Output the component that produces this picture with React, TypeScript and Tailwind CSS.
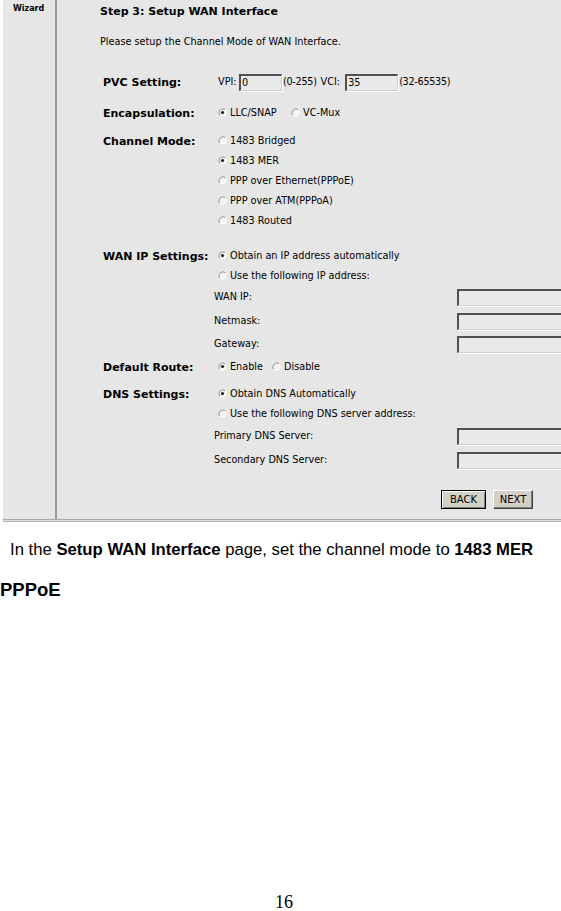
import type { ReactNode } from "react";

function Radio({ checked = false }: { checked?: boolean }) {
  return (
    <svg width="9" height="9" viewBox="0 0 9 9" className="shrink-0">
      <circle cx="4.5" cy="4.5" r="4" fill="#f3f3f3" />
      <path d="M1.7 7.3 A4 4 0 0 1 7.3 1.7" fill="none" stroke="#8c8c8c" strokeWidth="1" />
      <path d="M7.3 1.7 A4 4 0 0 1 1.7 7.3" fill="none" stroke="#ffffff" strokeWidth="1" />
      {checked && <circle cx="4.5" cy="4.5" r="1.6" fill="#1c1c1c" />}
    </svg>
  );
}

function Option({ checked, children, w }: { checked?: boolean; children: ReactNode; w?: string }) {
  return (
    <div className={`flex items-center gap-[3px] ${w ?? ""}`}>
      <Radio checked={checked} />
      <span>{children}</span>
    </div>
  );
}

function Field({ value, w }: { value?: string; w: string }) {
  return (
    <div
      className={`${w} h-[17px] shrink-0 bg-[#e9e9e9] border-t-2 border-l-2 border-t-[#505050] border-l-[#505050] border-b border-r border-b-[#d4d0c8] border-r-[#d4d0c8] shadow-[1px_1px_0_#ffffff] pl-[1px] leading-[13px] text-[9.7px]`}
    >
      {value}
    </div>
  );
}

function Row({ label, children, className = "" }: { label?: string; children?: ReactNode; className?: string }) {
  return (
    <div className={`flex h-[20px] items-center ml-[3px] ${className}`}>
      <div className="w-[115px] shrink-0 font-bold text-[11px]">{label}</div>
      <div className="flex items-center">{children}</div>
    </div>
  );
}

function FieldRow({ label, className = "" }: { label: string; className?: string }) {
  return (
    <div className={`flex h-[20px] items-center ml-[3px] ${className}`}>
      <div className="w-[111px] shrink-0" />
      <span className="w-[243px] shrink-0">{label}</span>
      <Field w="w-[110px]" />
    </div>
  );
}

export default function App() {
  return (
    <div className="w-[561px] h-[911px] bg-white overflow-hidden flex flex-col text-black">
      <div className="ml-[3px] h-[519px] shrink-0 flex bg-[#e6e6e6] overflow-hidden font-['DejaVu_Sans',sans-serif] text-[9.7px] leading-none">
        <div className="w-[52px] shrink-0 pl-[10px] pt-[5px] text-[8px] font-bold">Wizard</div>
        <div className="w-[2px] shrink-0 bg-[#9a9a9a]" />
        <div className="flex-1 flex flex-col pl-[43px]">
          <div className="mt-[1px] h-[20px] flex items-center font-bold text-[11px]">Step 3: Setup WAN Interface</div>
          <div className="mt-[11px] h-[20px] flex items-center">Please setup the Channel Mode of WAN Interface.</div>

          <Row label="PVC Setting:" className="mt-[20px]">
            <span className="w-[21px]">VPI:</span>
            <Field value="0" w="w-[43px]" />
            <span className="pl-[1px] tracking-[-0.3px]">(0-255)</span>
            <span className="ml-[4px]">VCI:</span>
            <Field value="35" w="w-[53px] ml-[5px]" />
            <span className="pl-[1px] tracking-[-0.3px]">(32-65535)</span>
          </Row>

          <Row label="Encapsulation:" className="mt-[11px]">
            <Option checked w="w-[73px]">LLC/SNAP</Option>
            <Option>VC-Mux</Option>
          </Row>

          <div className="mt-[8px] flex ml-[3px]">
            <div className="w-[115px] shrink-0 h-[20px] flex items-center font-bold text-[11px]">Channel Mode:</div>
            <div className="flex flex-col">
              <div className="h-[20px] flex items-center"><Option>1483 Bridged</Option></div>
              <div className="h-[20px] flex items-center"><Option checked>1483 MER</Option></div>
              <div className="h-[20px] flex items-center"><Option>PPP over Ethernet(PPPoE)</Option></div>
              <div className="h-[20px] flex items-center"><Option>PPP over ATM(PPPoA)</Option></div>
              <div className="h-[20px] flex items-center"><Option>1483 Routed</Option></div>
            </div>
          </div>

          <Row label="WAN IP Settings:" className="mt-[15px]">
            <Option checked>Obtain an IP address automatically</Option>
          </Row>
          <Row>
            <Option>Use the following IP address:</Option>
          </Row>
          <FieldRow label="WAN IP:" className="mt-[1px]" />
          <FieldRow label="Netmask:" className="mt-[4px]" />
          <FieldRow label="Gateway:" className="mt-[3px]" />

          <Row label="Default Route:" className="mt-[3px]">
            <Option checked w="w-[54px]">Enable</Option>
            <Option>Disable</Option>
          </Row>

          <Row label="DNS Settings:" className="mt-[7px]">
            <Option checked>Obtain DNS Automatically</Option>
          </Row>
          <Row>
            <Option>Use the following DNS server address:</Option>
          </Row>
          <FieldRow label="Primary DNS Server:" className="mt-[2px]" />
          <FieldRow label="Secondary DNS Server:" className="mt-[4px]" />

          <div className="mt-[20px] ml-[341px] flex gap-[7px] text-[10px]">
            <button className="w-[45px] h-[19px] bg-[#d4d0c8] border border-black shadow-[inset_1px_1px_0_#ffffff,inset_-1px_-1px_0_#808080]">
              BACK
            </button>
            <button className="w-[40px] h-[19px] bg-[#d4d0c8] border border-t-white border-l-white border-b-[#404040] border-r-[#404040] shadow-[inset_-1px_-1px_0_#808080]">
              NEXT
            </button>
          </div>
        </div>
      </div>
      <div className="ml-[3px] h-[1px] bg-[#a9a9a9]" />
      <div className="ml-[3px] h-[1px] bg-[#dcdcdc]" />
      <div className="ml-[3px] h-[1px] bg-[#b4b4b4]" />

      <p className="mt-[18px] pl-[10px] font-['Liberation_Sans',Arial,sans-serif] text-[16.7px] leading-[20px]">
        In the <b>Setup WAN Interface</b> page, set the channel mode to <b>1483 MER</b>
      </p>
      <p className="mt-[19px] font-['Liberation_Sans',Arial,sans-serif] text-[18.5px] leading-[22px] font-bold">PPPoE</p>

      <p className="mt-[292px] pl-[275px] font-['Liberation_Serif',serif] text-[18px] leading-[18px]">16</p>
    </div>
  );
}
